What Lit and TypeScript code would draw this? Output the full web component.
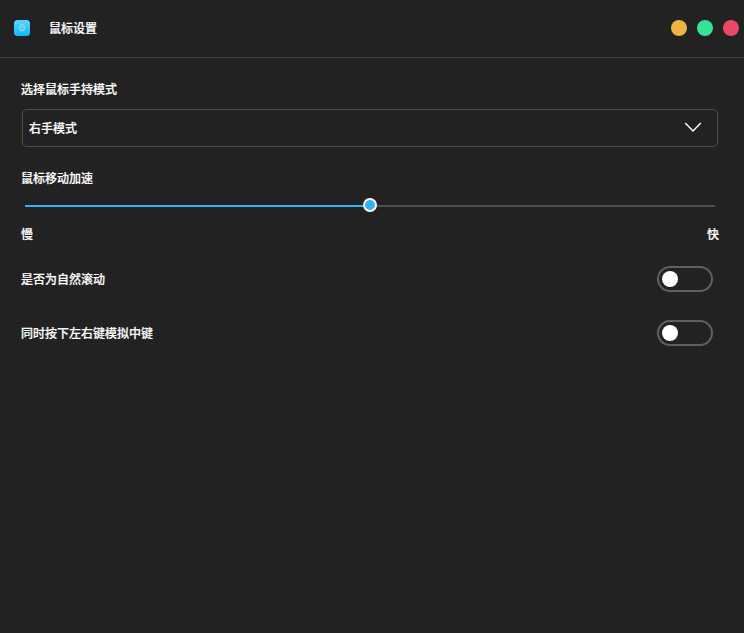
import { LitElement, html, css } from 'lit';
import { customElement, property, state } from 'lit/decorators.js';

@customElement('toggle-switch')
export class ToggleSwitch extends LitElement {
  static styles = css`
    :host {
      display: block;
      box-sizing: border-box;
      width: 56px;
      height: 26px;
      padding: 3px;
      border: 2px solid #606060;
      border-radius: 13px;
    }

    .knob {
      width: 16px;
      height: 16px;
      border-radius: 50%;
      background: #fff;
    }

    :host([checked]) {
      border-color: #2fb3ff;
      background: #2fb3ff;
    }
    :host([checked]) .knob { margin-left: auto; }
  `;

  @property({ type: Boolean, reflect: true }) checked = false;

  constructor() {
    super();
    this.addEventListener('click', () => { this.checked = !this.checked; });
  }

  render() {
    return html`<div class="knob"></div>`;
  }
}

@customElement('app-root')
export class AppRoot extends LitElement {
  static styles = css`
    :host {
      display: flex;
      flex-direction: column;
      height: 100vh;
      background: #222;
      color: #fff;
      font: 500 12px/18px 'Noto Sans CJK SC', sans-serif;
      -webkit-text-stroke: .2px #fff;
    }

    header {
      display: flex;
      align-items: center;
      box-sizing: border-box;
      height: 58px;
      padding: 0 5px 1px 14px;
      border-bottom: 1px solid #414141;
    }
    .logo { display: block; margin-right: 19px; }
    .window-buttons {
      display: flex;
      gap: 10px;
      margin-left: auto;
    }
    .dot { width: 16px; height: 16px; border-radius: 50%; }
    .minimize { background: #edb441; }
    .maximize { background: #36e496; }
    .close { background: #eb4766; }

    main { padding: 22px 26px 0 21px; }

    .select {
      display: flex;
      align-items: center;
      justify-content: space-between;
      box-sizing: border-box;
      height: 38px;
      margin: 11px 0 22px 1px;
      padding: 0 15px 0 6px;
      border: 1px solid #4d4d4d;
      border-radius: 5px;
    }

    .slider {
      display: flex;
      align-items: center;
      height: 14px;
      margin: 11px 3px 0 4px;
    }
    .fill, .rest { height: 2px; margin-top: 2px; }
    .fill { background: #2fb3ff; }
    .rest { flex: 1; background: #4f4f4f; }
    .thumb {
      box-sizing: border-box;
      width: 14px;
      height: 14px;
      border: 2px solid #fff;
      border-radius: 50%;
      background: #2fb3ff;
    }
    .range {
      display: flex;
      justify-content: space-between;
      margin: 13px -1px 23px 0;
    }

    .row {
      display: flex;
      align-items: center;
      justify-content: space-between;
      margin-bottom: 28px;
      padding-right: 5px;
    }
  `;

  @state() private speed = 49;

  render() {
    return html`
      <header>
        <svg class="logo" width="16" height="16" viewBox="0 0 16 16">
          <defs>
            <linearGradient id="bg" x1="0" y1="0" x2="0" y2="1">
              <stop offset="0" stop-color="#5ad6fd" />
              <stop offset="1" stop-color="#0fb9fb" />
            </linearGradient>
          </defs>
          <rect width="16" height="16" rx="3.5" fill="url(#bg)" />
          <rect x="5.5" y="4.5" width="5" height="6.5" rx="2.5" fill="#5bcaf3" stroke="#a0e2f9" stroke-width=".8" />
          <path d="M8 5.8v1.8" stroke="#8fdcf8" stroke-width=".8" />
        </svg>
        <span>鼠标设置</span>
        <div class="window-buttons">
          <div class="dot minimize"></div>
          <div class="dot maximize"></div>
          <div class="dot close"></div>
        </div>
      </header>
      <main>
        <div>选择鼠标手持模式</div>
        <div class="select">
          <span>右手模式</span>
          <svg width="18" height="12" viewBox="0 0 18 12">
            <path d="M1.2 1 9 9 16.8 1" fill="none" stroke="#fff" stroke-width="1.4" />
          </svg>
        </div>
        <div>鼠标移动加速</div>
        <div class="slider">
          <div class="fill" style="width: ${this.speed}%"></div>
          <div class="thumb"></div>
          <div class="rest"></div>
        </div>
        <div class="range"><span>慢</span><span>快</span></div>
        <div class="row"><span>是否为自然滚动</span><toggle-switch></toggle-switch></div>
        <div class="row"><span>同时按下左右键模拟中键</span><toggle-switch></toggle-switch></div>
      </main>
    `;
  }
}
